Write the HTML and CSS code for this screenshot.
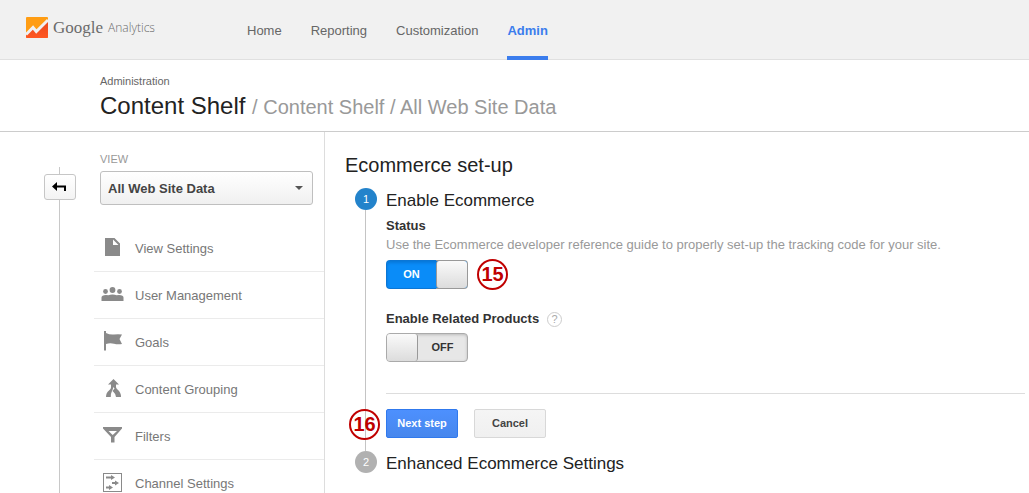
FILE: index.html
```html
<!DOCTYPE html>
<html lang="en">
<head>
<meta charset="utf-8">
<meta name="viewport" content="width=device-width, initial-scale=1">
<title>Google Analytics – Ecommerce set-up</title>
<link rel="stylesheet" href="styles.css">
</head>
<body>
<header class="topbar">
  <a class="brand" href="#">
    <svg class="brand-mark" viewBox="0 0 22 21" width="22" height="21" aria-hidden="true">
      <defs>
        <linearGradient id="hot" x1="0" y1="0" x2="0" y2="1"><stop offset="0" stop-color="#e8481c"/><stop offset="1" stop-color="#ff5722"/></linearGradient>
      </defs>
      <rect width="22" height="21" rx="1" fill="#ff9d13"/>
      <path d="M0 18 7 11l3 4L22 3v17q0 1-1 1H1q-1 0-1-1z" fill="url(#hot)"/>
      <path d="M0 17.500 7 10.500l3.300 4L22 3" fill="none" stroke="#f1f1f1" stroke-width="3"/>
    </svg>
    <span class="brand-google">Google</span>
    <span class="brand-product">Analytics</span>
  </a>
  <nav class="tabs" aria-label="Main">
    <a class="tab" href="#">Home</a>
    <a class="tab" href="#">Reporting</a>
    <a class="tab" href="#">Customization</a>
    <a class="tab tab-active" href="#" aria-current="page">Admin</a>
  </nav>
</header>

<div class="page-title">
  <div class="section-name">Administration</div>
  <h1 class="account">Content Shelf <span class="trail">/ Content Shelf / All Web Site Data</span></h1>
</div>

<div class="columns">
  <aside class="sidebar">
    <div class="rail">
      <button class="back" type="button" aria-label="Back">
        <svg width="14" height="10" viewBox="0 0 14 10" aria-hidden="true"><path d="M0 4.500 5 0v3.500h9V9h-2V5.500H5V9z" fill="#000"/></svg>
      </button>
    </div>
    <div class="side-body">
      <div class="view-picker">
        <label class="view-label" for="view">VIEW</label>
        <div class="select-box">
          <select class="select" id="view"><option>All Web Site Data</option></select>
        </div>
      </div>
      <nav class="menu" aria-label="View">
        <a class="item" href="#">
          <svg class="icon" viewBox="0 0 24 24" aria-hidden="true"><path d="M5 3h9.500L20 8.500V21H5zM13 4.500V10h5.500z" fill-rule="evenodd"/></svg>
          View Settings</a>
        <a class="item" href="#">
          <svg class="icon" viewBox="0 0 24 24" aria-hidden="true"><circle cx="12.500" cy="8" r="2.900"/><circle cx="5.500" cy="9.500" r="2.400"/><circle cx="19.500" cy="9.500" r="2.400"/><path d="M1.500 19v-3.500q0-2.500 4.500-2.500 1.500 0 2.500.3 1.500-.8 4-.8t4 .8q1-.3 2.500-.3 4.500 0 4.500 2.500V19z"/></svg>
          User Management</a>
        <a class="item" href="#">
          <svg class="icon" viewBox="0 0 24 24" aria-hidden="true"><path d="M4 2h2v2q4 2 8 1.500t8 0L19.500 10l2.500 5q-4 .8-8-.2t-8 .2v6.500H4z"/></svg>
          Goals</a>
        <a class="item" href="#">
          <svg class="icon" viewBox="0 0 24 24" aria-hidden="true"><path d="M13.500 3 19 8.500h-3V11q0 1 1.500 2.500Q21 16 21 21h-5q0-3-2.500-5l-1-1 2-2.500-1-1.500-.5 1.500q-.5 1.500-1 2.500-1.500 3-1.200 6H6q0-4.500 3-6.500 2-1.500 2-3v-3H8z"/></svg>
          Content Grouping</a>
        <a class="item" href="#">
          <svg class="icon" viewBox="0 0 24 24" aria-hidden="true"><path d="M3 4h19v1.500L14.500 14v5.500h-3.500V14L3 5.500zM8.500 8l4.200 4L17 8z" fill-rule="evenodd"/></svg>
          Filters</a>
        <a class="item" href="#">
          <svg class="icon" viewBox="0 0 24 24" aria-hidden="true"><path d="M3 3h19v19H3zM4 4v17h17V4z" fill-rule="evenodd"/><path d="M6 6.500h5V5l4 2.500-4 2.500V8.500H6zM12 12h3v-1.500l4 2.500-4 2.500V14h-3zM6 16.500h3V15l4 2.500L9 20v-1.500H6z"/></svg>
          Channel Settings</a>
      </nav>
    </div>
  </aside>

  <main class="content">
    <h2 class="heading">Ecommerce set-up</h2>
    <section class="step">
      <div class="marker"><span class="dot dot-current">1</span><span class="line"></span></div>
      <div class="step-body">
        <h3 class="step-title">Enable Ecommerce</h3>
        <div class="field-name status-name" id="status-name">Status</div>
        <p class="help-text">Use the Ecommerce developer reference guide to properly set-up the tracking code for your site.</p>
        <div class="control-row">
          <label class="toggle toggle-on"><input class="toggle-input" type="checkbox" role="switch" aria-labelledby="status-name" checked><span class="toggle-text">ON</span><span class="knob"></span></label>
          <span class="callout">15</span>
        </div>
        <div class="related-name"><span class="field-name" id="related-name">Enable Related Products</span><button class="hint" type="button" aria-label="Help">?</button></div>
        <div class="related-row">
          <label class="toggle toggle-off"><input class="toggle-input" type="checkbox" role="switch" aria-labelledby="related-name"><span class="knob"></span><span class="toggle-text">OFF</span></label>
        </div>
        <div class="actions">
          <span class="callout callout-side">16</span>
          <button class="button button-primary" type="button">Next step</button>
          <button class="button" type="button">Cancel</button>
        </div>
      </div>
    </section>
    <section class="step">
      <div class="marker"><span class="dot">2</span></div>
      <h3 class="step-title">Enhanced Ecommerce Settings</h3>
    </section>
  </main>
</div>
</body>
</html>
```
FILE: styles.css
```css
* { box-sizing: border-box; }

body {
  margin: 0;
  min-height: 100vh;
  display: flex;
  flex-direction: column;
  background: #fff;
  color: #222;
  font: 13px/20px "Liberation Sans", Arial, sans-serif;
}

a { color: inherit; text-decoration: none; }
h1, h2, h3, p { margin: 0; font-weight: normal; }
button, select { font: inherit; }

.topbar {
  display: flex;
  height: 60px;
  padding-left: 26px;
  background: #f1f1f1;
  border-bottom: 1px solid #e0e0e0;
}

.brand {
  display: flex;
  align-items: center;
  width: 221px;
  padding-bottom: 4px;
  color: #6b6b6b;
}
.brand-google { margin-left: 5px; font: 17px/20px "Liberation Serif", serif; }
.brand-product { margin-left: 5px; font: 300 12px/20px "Open Sans", sans-serif; }

.tabs { display: flex; gap: 29px; }
.tab { height: 60px; padding-top: 21px; color: #666; }
.tab-active {
  border-bottom: 4px solid #3b7ded;
  color: #3b7ded;
  font-weight: bold;
}

.page-title {
  padding: 11px 20px 9px 100px;
  border-bottom: 1px solid #ccc;
}
.section-name { font-size: 11px; line-height: 20px; color: #666; }
.account { font-size: 24px; line-height: 29px; }
.trail { font-size: 20px; color: #999; }

.columns { display: flex; flex: 1; }

.sidebar {
  display: flex;
  flex: none;
  width: 325px;
  border-right: 1px solid #ddd;
}

.rail {
  width: 94px;
  margin-top: 35px;
  padding: 7px 0 0 44px;
  background: linear-gradient(#c8c8c8, #c8c8c8) 59px 0 / 1px 100% no-repeat;
}
.back {
  display: grid;
  place-items: center;
  width: 32px;
  height: 26px;
  padding: 0 2px 1px 0;
  border: 1px solid #c6c6c6;
  border-radius: 3px;
  background: linear-gradient(#fff, #f3f3f3);
}

.side-body { flex: 1; }
.view-picker { padding: 17px 11px 20px 6px; }
.view-label { display: block; font-size: 11px; line-height: 20px; color: #999; }
.select-box { position: relative; margin-top: 2px; }
.select-box::after {
  content: "";
  position: absolute;
  top: 15px;
  right: 10px;
  border: 4px solid transparent;
  border-top-color: #555;
  border-bottom: 0;
  pointer-events: none;
}
.select {
  display: block;
  width: 100%;
  height: 34px;
  padding: 2px 24px 0 7px;
  appearance: none;
  border: 1px solid #bfbfbf;
  border-radius: 3px;
  background: linear-gradient(#fff, #f0f0f0);
  color: #444;
  font-weight: bold;
}

.item {
  display: flex;
  align-items: center;
  gap: 11px;
  height: 47px;
  padding: 1px 0 0 6px;
  border-bottom: 1px solid #ebebeb;
  color: #777;
}
.icon { width: 24px; height: 24px; margin-bottom: 3px; fill: #8a8a8a; }

.content { flex: 1; padding: 21px 4px 0 20px; }
.heading { margin-bottom: 11px; font-size: 20px; line-height: 24px; }

.step { display: flex; gap: 9px; padding-left: 10px; }
.marker { display: flex; flex-direction: column; align-items: center; width: 22px; }
.dot {
  width: 22px;
  height: 22px;
  border-radius: 50%;
  background: #b1b1b1;
  color: #fff;
  font-size: 11px;
  line-height: 22px;
  text-align: center;
}
.dot-current { background: #2383cb; }
.line { flex: 1; width: 1px; margin-right: 1px; background: #c4c4c4; }
.step-body { flex: 1; padding-bottom: 13px; }
.step-title { font-size: 17px; line-height: 26px; }

.field-name { font-weight: bold; color: #333; }
.status-name { margin-top: 2px; }
.help-text { line-height: 18px; color: #999; }

.control-row { display: flex; align-items: center; gap: 9px; height: 29px; margin-top: 6px; }

.toggle {
  position: relative;
  display: flex;
  width: 82px;
  height: 29px;
  border: 1px solid #aaa;
  border-radius: 4px;
  background: #e7e7e7;
  font-size: 11px;
  font-weight: bold;
  line-height: 27px;
  text-align: center;
  color: #333;
  box-shadow: inset 0 1px 3px #bbb;
}
.toggle-on {
  border-color: transparent;
  background:
    linear-gradient(#0a8cf8, #0a8cf8) padding-box,
    linear-gradient(90deg, #0b76d5 50px, #999 50px) border-box;
  color: #fff;
  box-shadow: inset 0 2px 3px #0878d8;
}
.toggle-input { position: absolute; inset: 0; margin: 0; opacity: 0; }
.toggle-text { flex: 1; }
.knob {
  width: 31px;
  border-right: 1px solid #999;
  border-radius: 3px;
  background: linear-gradient(#fafafa, #dcdcdc);
}
.toggle-on .knob { border-right: 0; border-left: 1px solid #999; }

.callout {
  width: 31px;
  height: 31px;
  border: 2px solid #c00000;
  border-radius: 50%;
  background: #fff;
  color: #c00000;
  font-size: 20px;
  font-weight: bold;
  line-height: 27px;
  text-align: center;
}

.related-name { display: flex; align-items: center; gap: 8px; margin-top: 20px; }
.hint {
  width: 15px;
  height: 15px;
  padding: 0;
  border: 1px solid #ccc;
  border-radius: 50%;
  background: #fff;
  color: #aaa;
  font-size: 11px;
  line-height: 13px;
}
.related-row { margin-top: 4px; padding-bottom: 31px; border-bottom: 1px solid #ddd; }

.actions { position: relative; display: flex; gap: 16px; margin-top: 15px; }
.callout-side { position: absolute; top: 0; left: -37px; background: none; }
.button {
  min-width: 72px;
  height: 29px;
  padding: 0 8px 2px;
  border: 1px solid #d8d8d8;
  border-radius: 2px;
  background: linear-gradient(#f5f5f5, #f0f0f0);
  color: #444;
  font-size: 11px;
  font-weight: bold;
}
.button-primary {
  border-color: #3079ed;
  background: linear-gradient(#4d90fe, #4787ed);
  color: #fff;
}
```
